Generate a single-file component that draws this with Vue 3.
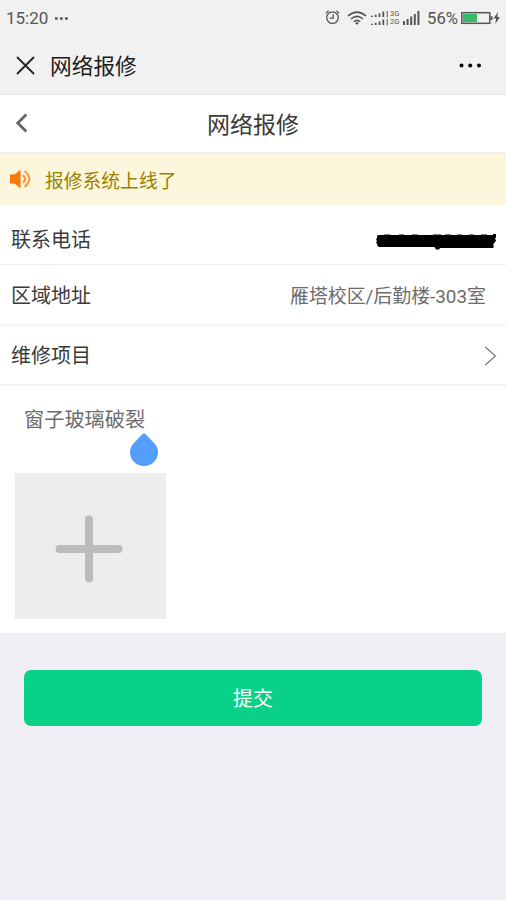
<script setup>
const title = '网络报修'
const weak = [1.3, 2.3, 3.6, 5.5]
const strong = [4, 6, 8.5, 11, 14]
</script>

<template>
  <div class="screen">
    <header class="status">
      <span class="time">15:20</span>
      <svg class="more-small" width="13" height="3" viewBox="0 0 13 3"><path d="M0 .3h2.7v2.4H0zM5 .3h2.7v2.4H5zM10 .3h2.7v2.4H10z" fill="#555" /></svg>
      <div class="status-icons">
        <svg class="alarm" width="15" height="15" viewBox="0 0 15 15" fill="none" stroke="#555" stroke-width="1.3">
          <circle cx="7.5" cy="7.6" r="5.8" />
          <path d="M8.2 4.3v3.9H4.6M.8 3.4 3.6.6M11.4.6l2.8 2.8" />
        </svg>
        <svg class="wifi" width="20" height="14" viewBox="0 0 20 14" fill="none" stroke="#555" stroke-width="1.5">
          <path d="M1 5Q10-2.8 19 5M4 8Q10 2.7 16 8M6.8 10.7Q10 8 13.2 10.7" />
          <circle cx="10" cy="12.2" r="1.3" fill="#555" stroke="none" />
        </svg>
        <div class="dual">
          <div v-for="net in ['3G', '2G']" :key="net" class="dual-row">
            <svg width="18" height="7" viewBox="0 0 18 7" fill="#555">
              <rect v-for="(h, i) in weak" :key="i" :x="i * 3.8" :y="6 - h" width="1.8" :height="h" />
              <rect x="15.7" y="0" width="1" height="6.5" />
            </svg>
            <span>{{ net }}</span>
          </div>
        </div>
        <svg class="signal" width="18" height="14" viewBox="0 0 18 14" fill="#555">
          <rect v-for="(h, i) in strong" :key="i" :x="i * 3.6" :y="14 - h" width="2" :height="h" />
        </svg>
        <span class="percent">56%</span>
        <svg class="battery" width="39" height="14" viewBox="0 0 39 14">
          <rect x=".8" y="1.7" width="28" height="10.6" fill="none" stroke="#555" stroke-width="1.5" />
          <rect x="2" y="3" width="14" height="8" fill="#3dba69" />
          <path d="M29.5 5.2h2v3.8h-2zM37 1l-4.5 6.6h2.6L34.3 13l4.7-6.9h-2.7z" fill="#555" />
        </svg>
      </div>
    </header>

    <div class="webview-bar">
      <svg class="close" width="19" height="19" viewBox="0 0 19 19"><path d="m1 1 17 17M18 1 1 18" stroke="#222" stroke-width="1.8" fill="none" /></svg>
      <span class="webview-title">{{ title }}</span>
      <svg class="more" width="23" height="5" viewBox="0 0 23 5"><circle cx="2.5" cy="2.5" r="2" /><circle cx="11.2" cy="2.5" r="2" /><circle cx="20" cy="2.5" r="2" /></svg>
    </div>

    <nav class="nav">
      <svg class="back" width="12" height="20" viewBox="0 0 12 20"><path d="M10.3 1.5 1.8 10l8.5 8.5" fill="none" stroke="#666" stroke-width="2.8" /></svg>
      <h1>{{ title }}</h1>
    </nav>

    <div class="notice">
      <svg width="23" height="20" viewBox="0 0 23 20">
        <path d="M0 5.5h4.5L10.5.8v18.4l-6-4.7H0z" fill="#ff7608" />
        <path d="M13 6.3q4 3.7 0 7.4" fill="none" stroke="#ff8c32" stroke-width="2" />
        <path d="M14.5 2q9.5 8 0 16" fill="none" stroke="#ff9a4a" stroke-width="2.2" />
      </svg>
      <span>报修系统上线了</span>
    </div>

    <main class="form">
      <div class="row phone">
        <span class="label">联系电话</span>
        <svg width="122" height="18" viewBox="0 0 122 18">
          <path d="M3 3h115V2h3v3.500l-1 1 1 2-1.500 2.500-1 .5V16H65l-1 1.500h-3L59.500 15H4l-1-1H2l.5-2-1.500-1 1-2-1-1.500 1-1.500V4z" fill="#000" />
          <path d="M9 2.600h6M24 2.600h5M37 2.600h6M58 2.600h8M70 2.600h6M82 2.600h5M94 2.600h5M106 2.600h6" stroke="#777" stroke-width="1" />
        </svg>
      </div>
      <div class="row address">
        <span class="label">区域地址</span>
        <span class="value">雁塔校区/后勤楼-303室</span>
      </div>
      <div class="row project">
        <span class="label">维修项目</span>
        <svg width="13" height="20" viewBox="0 0 13 20"><path d="m1.200 1 10.300 9L1.200 19" fill="none" stroke="#777" stroke-width="1.200" /></svg>
      </div>
      <div class="description">
        <span>窗子玻璃破裂</span>
        <svg class="handle" width="28" height="34" viewBox="0 0 28 34"><path d="M14 .5q1 0 2 1l7.500 8Q28 14 28 19.300a14 13.700 0 0 1-28 0Q0 14 4.500 9.500l7.500-8q1-1 2-1z" fill="#529efa" /></svg>
      </div>
      <div class="upload">
        <svg width="68" height="68" viewBox="0 0 68 68"><path d="M34 4.500v59M4.500 34h59" stroke="#bbb" stroke-width="8" stroke-linecap="round" /></svg>
      </div>
    </main>

    <button class="submit" type="button">提交</button>
  </div>
</template>

<style>
body {
  margin: 0;
  background: #efeef4;
}
</style>

<style scoped>
.screen {
  box-sizing: border-box;
  width: 506px;
  height: 900px;
  overflow: hidden;
  background: #efeef4;
  color: #3a3a3a;
  font-family: Roboto, "Noto Sans CJK SC", sans-serif;
}
svg {
  display: block;
  flex: none;
}
.status {
  box-sizing: border-box;
  display: flex;
  align-items: center;
  height: 36px;
  padding: 0 6px;
  background: #f1f1f1;
  color: #555;
  font-size: 17px;
}
.time {
  width: 49px;
}
.status-icons {
  display: flex;
  align-items: center;
  margin-left: auto;
}
.alarm {
  margin-bottom: 2px;
}
.wifi {
  margin: 0 0 1px 7px;
}
.dual {
  margin-left: 4px;
}
.dual-row {
  display: flex;
  gap: 1px;
  height: 8px;
  align-items: center;
  font-size: 7.5px;
  line-height: 8px;
}
.dual-row span {
  width: 10px;
}
.signal {
  margin: 0 0 1px 3px;
}
.percent {
  width: 32px;
  margin-left: 6px;
  font-size: 16.7px;
}
.battery {
  margin-left: 2px;
}
.webview-bar {
  box-sizing: border-box;
  display: flex;
  align-items: center;
  height: 59px;
  padding: 0 24px 0 16px;
  border-bottom: 1px solid #e4e4e4;
  background: #f1f1f1;
}
.webview-title {
  margin: -2px 0 0 15px;
  color: #1c1c1c;
  font-size: 21.7px;
}
.more {
  margin-left: auto;
}
.nav {
  box-sizing: border-box;
  display: grid;
  grid-template-columns: 40px 1fr 40px;
  align-items: center;
  height: 58px;
  border-bottom: 1px solid #eee;
  background: #fff;
}
.back {
  margin: 0 0 2px 16px;
}
h1 {
  margin: -2px 0 0;
  font-size: 23px;
  font-weight: 400;
  text-align: center;
}
.notice {
  box-sizing: border-box;
  display: flex;
  align-items: center;
  height: 52px;
  padding-left: 10px;
  background: #fbf6dc;
  color: #998200;
  font-size: 18.8px;
}
.notice span {
  margin: 1px 0 0 12px;
}
.form {
  box-sizing: border-box;
  height: 428px;
  background: #fff;
}
.row {
  box-sizing: border-box;
  display: flex;
  align-items: center;
  justify-content: space-between;
  height: 60px;
  padding: 0 20px 0 11px;
  border-bottom: 2px solid #f4f4f4;
}
.phone {
  padding: 8px 9px 0 11px;
  border-bottom: 1px solid #eee;
}
.phone svg {
  margin-top: 4px;
}
.address {
  height: 61px;
  padding-bottom: 1px;
}
.project {
  padding: 0 9px 2px 11px;
}
.project svg {
  margin-top: 4px;
}
.label {
  font-size: 20px;
}
.value {
  color: #6c6c6c;
  font-size: 18.9px;
}
.description {
  position: relative;
  box-sizing: border-box;
  height: 87px;
  padding: 19px 24px 0;
  color: #6c6c6c;
  font-size: 20.2px;
  line-height: 30px;
}
.handle {
  position: absolute;
  top: 47px;
  left: 130px;
}
.upload {
  display: flex;
  align-items: center;
  justify-content: center;
  width: 151px;
  height: 146px;
  margin-left: 15px;
  background: #ededed;
}
.upload svg {
  margin: 6px 3px 0 0;
}
.submit {
  display: block;
  width: 458px;
  height: 56px;
  margin: 37px auto 0;
  padding: 0 0 2px;
  border: 0;
  border-radius: 7px;
  background: #09d188;
  color: #fff;
  font-family: inherit;
  font-size: 20px;
}
</style>
